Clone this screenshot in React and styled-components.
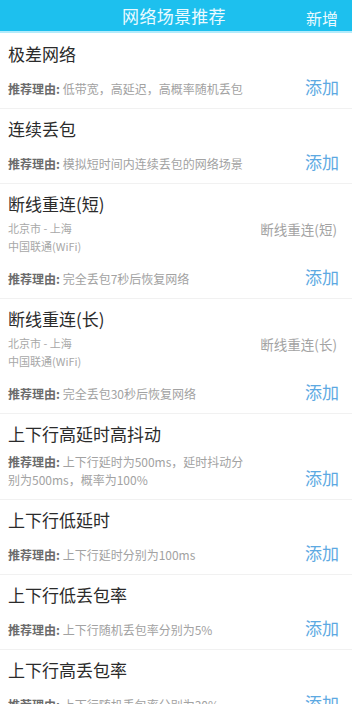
import styled, { createGlobalStyle } from "styled-components"

const scenes = [
    { title: "极差网络", reason: "低带宽，高延迟，高概率随机丢包" },
    { title: "连续丢包", reason: "模拟短时间内连续丢包的网络场景" },
    { title: "断线重连(短)", reason: "完全丢包7秒后恢复网络", route: "北京市 - 上海", carrier: "中国联通(WiFi)", tag: "断线重连(短)" },
    { title: "断线重连(长)", reason: "完全丢包30秒后恢复网络", route: "北京市 - 上海", carrier: "中国联通(WiFi)", tag: "断线重连(长)" },
    { title: "上下行高延时高抖动", reason: "上下行延时为500ms，延时抖动分别为500ms，概率为100%" },
    { title: "上下行低延时", reason: "上下行延时分别为100ms" },
    { title: "上下行低丢包率", reason: "上下行随机丢包率分别为5%" },
    { title: "上下行高丢包率", reason: "上下行随机丢包率分别为30%" },
]

function App() {
    return (
        <>
            <GlobalStyle />
            <Page>
                <Header>
                    <HeaderTitle>网络场景推荐</HeaderTitle>
                    <HeaderAction>新增</HeaderAction>
                </Header>
                <List>
                    {scenes.map((s) => (
                        <Item key={s.title}>
                            <Title>{s.title}</Title>
                            {s.route && (
                                <Location>
                                    <Route>
                                        <span>{s.route}</span>
                                        <span>{s.carrier}</span>
                                    </Route>
                                    <Tag>{s.tag}</Tag>
                                </Location>
                            )}
                            <Footer>
                                <Reason>
                                    <b>推荐理由: </b>
                                    {s.reason}
                                </Reason>
                                <AddButton>添加</AddButton>
                            </Footer>
                        </Item>
                    ))}
                </List>
            </Page>
        </>
    )
}

const GlobalStyle = createGlobalStyle`
    body {
        margin: 0;
        background: #fff;
        font-family: "Noto Sans CJK SC", "Noto Sans", sans-serif;
    }
`

const Page = styled.div`
    width: 352px;
    height: 704px;
    overflow: hidden;
    background: #fff;
`

const Header = styled.div`
    height: 31px;
    background: #1dc0ee;
    border-bottom: 2px solid #b3ebfb;
    display: flex;
    align-items: center;
    justify-content: center;
    position: relative;
    color: #eafaff;
`

const HeaderTitle = styled.div`
    font-size: 17px;
    letter-spacing: 0.3px;
    margin-left: -4px;
`

const HeaderAction = styled.div`
    position: absolute;
    right: 14px;
    top: 6px;
    font-size: 16px;
`

const List = styled.div`
    display: flex;
    flex-direction: column;
    padding-top: 1px;
`

const Item = styled.div`
    padding: 9px 13px 10px 8px;
    border-bottom: 1px solid #f1f1f1;
`

const Title = styled.div`
    font-size: 17px;
    line-height: 22px;
    color: #2b2b2b;
`

const Location = styled.div`
    display: flex;
    justify-content: space-between;
    align-items: flex-start;
    margin-top: 4px;
`

const Route = styled.div`
    display: flex;
    flex-direction: column;
    font-size: 11px;
    line-height: 18px;
    color: #a8a8a8;
`

const Tag = styled.div`
    font-size: 13.5px;
    line-height: 20px;
    color: #a3a3a3;
    padding-right: 2px;
`

const Footer = styled.div`
    display: flex;
    align-items: flex-end;
    justify-content: space-between;
    min-height: 25px;
    margin-top: 8px;
`

const Reason = styled.div`
    max-width: 240px;
    font-size: 12px;
    line-height: 18px;
    color: #a2a2a2;

    b {
        color: #6b6b6b;
        font-weight: 700;
    }
`

const AddButton = styled.div`
    font-size: 17px;
    line-height: 22px;
    color: #5da9e2;
    flex-shrink: 0;
`

export default App
